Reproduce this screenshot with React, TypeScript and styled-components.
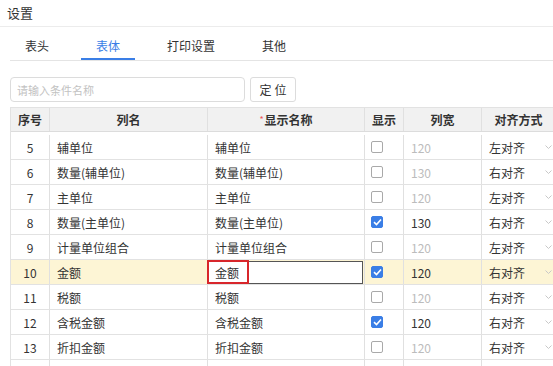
import React from "react";
import styled, { createGlobalStyle } from "styled-components";

const GlobalStyle = createGlobalStyle`
  html, body {
    margin: 0;
    padding: 0;
    background: #fff;
  }
  body {
    font-family: "Noto Sans CJK SC", "Noto Sans", sans-serif;
    color: #333;
  }
`;

const Page = styled.div`
  width: 553px;
  height: 366px;
  overflow: hidden;
  background: #fff;
`;

const TitleBar = styled.div`
  height: 26px;
  line-height: 25px;
  padding-left: 7px;
  font-size: 13px;
  color: #333;
  border-bottom: 1px solid #ececec;
`;

const Content = styled.div`
  padding-left: 10px;
`;

const TabBar = styled.div`
  display: flex;
  gap: 17px;
  height: 33px;
  border-bottom: 1px solid #e4e4e4;
`;

const Tab = styled.div<{ $active?: boolean }>`
  padding: 0 15px;
  font-size: 12px;
  line-height: 37px;
  color: ${(p) => (p.$active ? "#3a7ee6" : "#333")};
  border-bottom: 2px solid ${(p) => (p.$active ? "#3a7ee6" : "transparent")};
`;

const SearchRow = styled.div`
  display: flex;
  gap: 5px;
  margin-top: 16px;
`;

const SearchInput = styled.input`
  box-sizing: border-box;
  width: 235px;
  height: 25px;
  border: 1px solid #dcdcdc;
  border-radius: 4px;
  padding: 0 6px;
  font-family: inherit;
  font-size: 11px;
  outline: none;
  &::placeholder {
    color: #c2c2c2;
  }
`;

const LocateButton = styled.button`
  box-sizing: border-box;
  width: 46px;
  height: 25px;
  border: 1px solid #dcdcdc;
  border-radius: 3px;
  background: #fff;
  font-family: inherit;
  font-size: 12px;
  letter-spacing: 3px;
  padding: 0 0 0 3px;
  color: #333;
`;

const Table = styled.div`
  width: 545px;
  margin-top: 5px;
  border-left: 1px solid #e2e2e2;
`;

const cols = "39px 158px 157px 39px 78px 74px";

const HeaderRow = styled.div`
  display: grid;
  grid-template-columns: ${cols};
  height: 25px;
  background: #f1f1f1;
  border-top: 1px solid #e2e2e2;
  border-bottom: 1px solid #dcdcdc;
  box-sizing: border-box;
  margin-bottom: 3px;
`;

const HeadCell = styled.div`
  display: flex;
  align-items: center;
  justify-content: center;
  font-size: 12px;
  font-weight: bold;
  color: #333;
  border-right: 1px solid #e0e0e0;
`;

const Required = styled.span`
  color: #e55;
  font-size: 9px;
  font-weight: normal;
  margin-right: 1px;
`;

const Row = styled.div<{ $active?: boolean }>`
  display: grid;
  grid-template-columns: ${cols};
  height: 25px;
  box-sizing: border-box;
  border-bottom: 1px solid #e2e2e2;
  background: ${(p) => (p.$active ? "#fdf5d5" : "#fff")};
`;

const Cell = styled.div<{ $center?: boolean; $muted?: boolean }>`
  display: flex;
  align-items: center;
  justify-content: ${(p) => (p.$center ? "center" : "flex-start")};
  padding: 0 ${(p) => (p.$center ? "0" : "7px")};
  font-size: 12px;
  color: ${(p) => (p.$muted ? "#bcbcbc" : "#333")};
  border-right: 1px solid #e0e0e0;
  position: relative;
  white-space: nowrap;
`;

const CheckCell = styled(Cell)`
  padding: 0 0 0 6px;
`;

const EditCell = styled.div`
  position: relative;
  display: flex;
  border-right: 1px solid #e0e0e0;
  padding: 1px 1px 0 0;
`;

const EditInput = styled.div`
  flex: 1;
  display: flex;
  align-items: center;
  padding-left: 6px;
  font-size: 12px;
  color: #333;
  background: #fff;
  border: 1px solid #555;
`;

const Annotation = styled.div`
  position: absolute;
  left: -1px;
  top: 0;
  width: 42px;
  height: 24px;
  box-sizing: border-box;
  border: 2px solid #d8262b;
`;

const Box = styled.span<{ $checked?: boolean }>`
  width: 12px;
  height: 12px;
  box-sizing: border-box;
  border-radius: 2px;
  border: 1px solid ${(p) => (p.$checked ? "#3a7ee6" : "#a9a9a9")};
  background: ${(p) => (p.$checked ? "#3a7ee6" : "#fff")};
  display: flex;
  align-items: center;
  justify-content: center;
`;

const Chevron = styled.svg`
  position: absolute;
  right: 3px;
  top: 10px;
`;

type Item = {
  no: number;
  name: string;
  show: boolean;
  width: number;
  align: string;
};

const rows: Item[] = [
  { no: 5, name: "辅单位", show: false, width: 120, align: "左对齐" },
  { no: 6, name: "数量(辅单位)", show: false, width: 130, align: "右对齐" },
  { no: 7, name: "主单位", show: false, width: 120, align: "左对齐" },
  { no: 8, name: "数量(主单位)", show: true, width: 130, align: "右对齐" },
  { no: 9, name: "计量单位组合", show: false, width: 120, align: "左对齐" },
  { no: 10, name: "金额", show: true, width: 120, align: "右对齐" },
  { no: 11, name: "税额", show: false, width: 120, align: "右对齐" },
  { no: 12, name: "含税金额", show: true, width: 120, align: "右对齐" },
  { no: 13, name: "折扣金额", show: false, width: 120, align: "右对齐" },
];

const Check = ({ checked }: { checked: boolean }) => (
  <Box $checked={checked}>
    {checked && (
      <svg width="9" height="8" viewBox="0 0 9 8">
        <path d="M1 4.2 L3.5 6.5 L8 1.5" fill="none" stroke="#fff" strokeWidth="1.6" />
      </svg>
    )}
  </Box>
);

const App = () => {
  return (
    <Page>
      <GlobalStyle />
      <TitleBar>设置</TitleBar>
      <Content>
        <TabBar>
          <Tab>表头</Tab>
          <Tab $active>表体</Tab>
          <Tab>打印设置</Tab>
          <Tab>其他</Tab>
        </TabBar>

        <SearchRow>
          <SearchInput placeholder="请输入条件名称" />
          <LocateButton>定位</LocateButton>
        </SearchRow>

        <Table>
          <HeaderRow>
            <HeadCell>序号</HeadCell>
            <HeadCell>列名</HeadCell>
            <HeadCell>
              <Required>*</Required>显示名称
            </HeadCell>
            <HeadCell>显示</HeadCell>
            <HeadCell>列宽</HeadCell>
            <HeadCell>对齐方式</HeadCell>
          </HeaderRow>
          {rows.map((r) => {
            const active = r.no === 10;
            return (
              <Row key={r.no} $active={active}>
                <Cell $center>{r.no}</Cell>
                <Cell>{r.name}</Cell>
                {active ? (
                  <EditCell>
                    <EditInput>{r.name}</EditInput>
                    <Annotation />
                  </EditCell>
                ) : (
                  <Cell>{r.name}</Cell>
                )}
                <CheckCell>
                  <Check checked={r.show} />
                </CheckCell>
                <Cell $muted={!r.show}>{r.width}</Cell>
                <Cell>
                  {r.align}
                  <Chevron width="7" height="4" viewBox="0 0 7 4">
                    <path d="M0.5 0.5 L3.5 3.5 L6.5 0.5" fill="none" stroke="#c8c8c8" strokeWidth="1" />
                  </Chevron>
                </Cell>
              </Row>
            );
          })}
          {/* next row, only its top edge shows below the fold */}
          <Row>
            <Cell />
            <Cell />
            <Cell />
            <Cell />
            <Cell />
            <Cell />
          </Row>
        </Table>
      </Content>
    </Page>
  );
};

export default App;
